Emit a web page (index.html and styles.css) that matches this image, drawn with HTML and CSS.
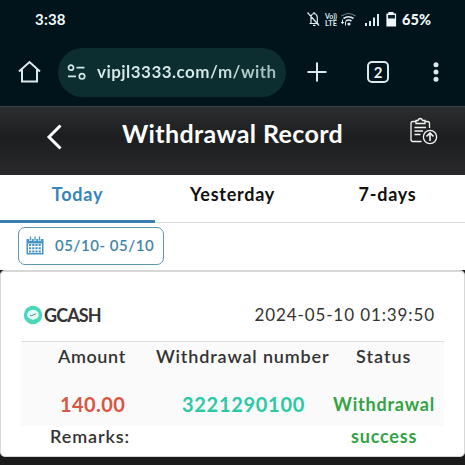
FILE: index.html
```html
<!DOCTYPE html>
<html lang="en">
<head>
<meta charset="utf-8">
<title>Withdrawal Record</title>
<link rel="stylesheet" href="styles.css">
</head>
<body>
<div class="screen">
  <div class="statusbar">
    <span class="clock">3:38</span>
    <svg class="status-icons" width="92" height="20" viewBox="0 0 92 20" fill="none" stroke="#dcebf0" stroke-width="1.2">
      <path d="M3.5 14.5h9M5 14V8.5Q5 5 8.2 4.5Q11 5 11.3 8.500V14M8 3v1.500M7 16.300h2.500M1.500 3.500l11.500 13"/>
      <text x="19" y="9.500" class="volte" textLength="12" lengthAdjust="spacingAndGlyphs">Vo))</text>
      <text x="19" y="16.500" class="volte" textLength="12" lengthAdjust="spacingAndGlyphs">LTE</text>
      <path d="M35.500 7q7-5 14 0" stroke="#71868d"/><path d="M37.500 9.500q5-3.500 10 0M40 12q2.700-2 5.500 0" stroke-width="1.600"/>
      <path d="M36.500 10.500v4M39.500 12.500v4M35 13l1.500 1.700 1.500-1.700" stroke-width="1"/><circle cx="43" cy="15" r="1" fill="#dcebf0"/>
      <path d="M60 14v3M64 12v5M68 8.500V17M72 5V17" stroke-width="2"/>
      <path d="M81 5h2V3.500h4V5h2.500v12H81z" fill="#f0f8fa" stroke="#f0f8fa"/><path d="M82 6h7v3.500h-7z" fill="#13242a" stroke="none"/>
    </svg>
    <span class="battery">65%</span>
  </div>
  <div class="toolbar">
    <svg class="home" width="24" height="24" viewBox="0 0 24 24" fill="none" stroke="#dce9ec" stroke-width="2"><path d="M2 11.500L12.500 2L23 11.500M5 9.500V21.500H20V9.500"/></svg>
    <div class="address">
      <svg width="20" height="18" viewBox="0 0 20 18" fill="none" stroke="#d4e7e6" stroke-width="1.700"><circle cx="4" cy="4.700" r="2.500"/><path d="M9.500 4.700H17.500M1 13.300H9"/><circle cx="15" cy="13.300" r="2.700"/></svg>
      <span class="url">vipjl3333.com/m/with</span>
    </div>
    <svg class="plus" width="20" height="20" viewBox="0 0 20 20" stroke="#dce9ec" stroke-width="2"><path d="M.5 10h19M10 .5v19"/></svg>
    <span class="count">2</span>
    <svg class="more" width="6" height="20" viewBox="0 0 6 20" fill="#dce9ec"><circle cx="3" cy="2.800" r="2.500"/><circle cx="3" cy="10" r="2.500"/><circle cx="3" cy="17.200" r="2.500"/></svg>
  </div>
  <header class="header">
    <svg class="back" width="18" height="26" viewBox="0 0 18 26" fill="none" stroke="#fff" stroke-width="3"><path d="M14.500 1.500L3 13L14.500 24.500"/></svg>
    <h1>Withdrawal Record</h1>
    <svg class="report" width="30" height="30" viewBox="0 0 30 30" fill="none" stroke="#f4f4f4" stroke-width="1.300">
      <path d="M7 4.500H4Q2 4.500 2 6.500V22.500Q2 24.500 4 24.500H12.500M16 4.500H18.500Q20.500 4.500 20.500 6.500V11M7 3.500H9Q9.500 1.500 11.300 1.500Q13 1.500 13.500 3.500H16V6.500H7zM5.500 10.500H17M5.500 14H14M5.500 17.500H11.500"/>
      <circle cx="21" cy="20" r="6.600"/><path d="M21 24V16.500M17.500 19.500L21 16L24.500 19.500" stroke-width="1.600"/>
    </svg>
  </header>
  <nav class="tabs">
    <span class="tab active"><b>Today</b></span>
    <span class="tab"><b>Yesterday</b></span>
    <span class="tab"><b>7-days</b></span>
  </nav>
  <div class="filter">
    <div class="range">
      <svg width="18" height="19" viewBox="0 0 18 19" fill="none"><path d="M.5 3h17v15.500H.5z" fill="#4795c2"/><path d="M4.500 0v5M9 0v5M13.500 0v5" stroke="#fff" stroke-width="2.600"/><path d="M4.500.5v4M9 .5v4M13.500.5v4" stroke="#4795c2" stroke-width="1.300"/><path d="M2 7.500h14v9.500H2z" fill="#fff"/><path d="M3 9h12M3 12.200h12M3 15.400h12" stroke="#4795c2" stroke-width="2" stroke-dasharray="2.200 1"/></svg>
      <span>05/10- 05/10</span>
    </div>
  </div>
  <main class="card-wrap">
    <section class="card">
      <div class="card-head">
        <svg width="20" height="20" viewBox="0 0 20 20"><circle cx="10" cy="10" r="9.200" fill="#48d7b7"/><ellipse cx="10" cy="9.700" rx="5.800" ry="5" fill="#e1fff8"/><path d="M7 10.500l1.700.2 4.300-2" fill="none" stroke="#568f86"/></svg>
        <strong>GCASH</strong>
        <time>2024-05-10 01:39:50</time>
      </div>
      <div class="grid">
        <span class="label l-amount">Amount</span><span class="label l-number">Withdrawal number</span><span class="label l-status">Status</span>
        <span class="amount">140.00</span><span class="number">3221290100</span><span class="status">Withdrawal</span>
      </div>
      <div class="footer"><span class="remarks">Remarks:</span><span class="success">success</span></div>
    </section>
  </main>
</div>
</body>
</html>
```
FILE: styles.css
```css
* { box-sizing: border-box; }
body { margin: 0; background: #1b1b1c; font-family: Lato, "Open Sans", sans-serif; }
.screen { width: 465px; height: 465px; overflow: hidden; display: flex; flex-direction: column; white-space: nowrap; }
.statusbar { height: 38px; flex: none; display: flex; align-items: center; background: #01131b; color: #f0f8fa; padding-left: 35px; }
.clock { width: 271px; font-size: 15px; font-weight: 700; letter-spacing: .2px; }
.status-icons { flex: none; }
.volte { font-size: 7px; font-weight: 700; fill: #dcebf0; stroke: none; }
.battery { margin-left: 4px; font-size: 14.5px; font-weight: 900; letter-spacing: .1px; }
.toolbar { height: 69px; flex: none; display: flex; align-items: center; background: #01131b; padding-left: 17px; border-bottom: 1px solid #36484c; }
.home { flex: none; }
.address { display: flex; align-items: center; gap: 10px; width: 228px; height: 49px; margin-left: 17px; padding-left: 9px; border-radius: 25px; background: #0d2e31; }
.address svg { flex: none; }
.url { width: 180px; font-size: 17px; line-height: 28px; font-weight: 700; letter-spacing: .46px; background: linear-gradient(90deg, #d9ebea 60%, #9dbbb9); background-clip: text; -webkit-text-fill-color: transparent; }
.plus { flex: none; margin-left: 21px; }
.count { width: 22px; height: 22px; margin-left: 40px; border: 2px solid #dce9ec; border-radius: 5px; color: #e5f0f2; text-align: center; font-size: 15px; line-height: 18px; font-weight: 700; }
.more { flex: none; margin-left: 44px; }
.header { height: 68px; flex: none; display: flex; align-items: flex-start; background: linear-gradient(#2c2d2e, #1d1e1f 45%, #29292b); padding-left: 46px; }
.back { flex: none; margin-top: 17px; }
h1 { margin: 10px 0 0 58px; width: 221px; color: #fff; font-size: 25px; line-height: 32px; font-weight: 700; letter-spacing: .38px; }
.report { flex: none; margin: 10px 0 0 66px; }
.tabs { height: 48px; flex: none; display: grid; grid-template-columns: repeat(3, 1fr); background: #fff; border-bottom: 1px solid #dcdcdc; color: #111; }
.tab { height: 48px; text-align: center; font-size: 18px; line-height: 39px; letter-spacing: .75px; }
.active { color: #3585bb; border-bottom: 3px solid #3d7eae; }
.filter { height: 47px; flex: none; background: #fff; padding: 4px 0 0 18px; }
.range { width: 146px; height: 38px; display: flex; align-items: center; gap: 11px; padding: 0 0 2px 7px; border: 1px solid #5e98b5; border-radius: 7px; color: #4385a8; font-size: 15px; font-weight: 600; letter-spacing: .55px; }
.card-wrap { height: 187px; flex: none; background: #1b1b1c; }
.card { height: 187px; background: #fff; border: 1px solid #d7d7d7; border-top-width: 2px; border-radius: 5px; padding: 0 20px; color: #333; }
.card-head { height: 69px; display: flex; align-items: center; padding: 16px 9px 0 2px; }
.card-head strong { margin-left: 1px; font-size: 18px; letter-spacing: -.9px; }
.card-head time { margin-left: auto; font-size: 17px; letter-spacing: .9px; }
.grid { height: 85px; display: grid; grid-template-columns: 131px 180px 112px; grid-template-rows: 30px 54px; background: #fafafa; border-top: 1px solid #ddd; font-size: 18px; }
.grid span { line-height: 28px; }
.label { font-weight: 600; }
.grid .l-amount { padding-left: 37px; letter-spacing: .6px; }
.grid .l-number { padding-left: 4px; letter-spacing: .85px; }
.grid .l-status { padding-left: 24px; letter-spacing: 1px; }
.grid .amount, .grid .number, .grid .status { padding-top: 18px; font-weight: 700; }
.grid .amount { padding-left: 39px; color: #d95542; font-size: 20px; letter-spacing: .4px; }
.grid .number { padding-left: 30px; color: #2bc9a4; font-size: 20px; letter-spacing: .7px; }
.grid .status { color: #32a344; padding-left: 1px; letter-spacing: .8px; }
.footer { height: 30px; display: flex; font-size: 18px; line-height: 20px; font-weight: 600; }
.remarks { width: 301px; padding-left: 29px; letter-spacing: .9px; }
.success { margin-left: 29px; color: #32a344; font-weight: 700; letter-spacing: .8px; }
```
